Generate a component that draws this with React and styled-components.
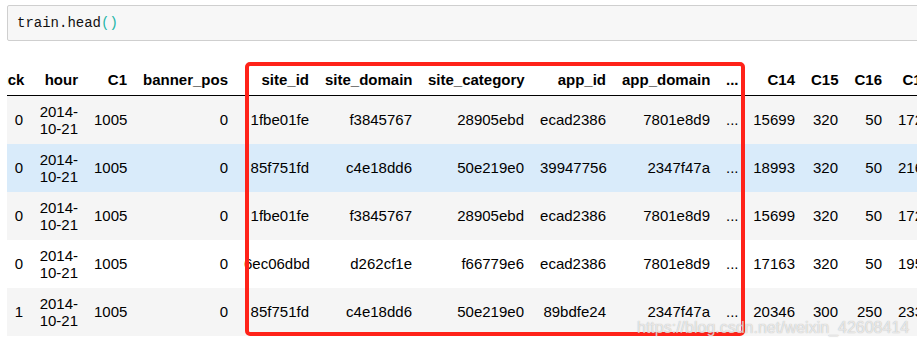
import React from 'react';
import styled, { createGlobalStyle } from 'styled-components';

const GlobalStyle = createGlobalStyle`
  html, body {
    margin: 0;
    padding: 0;
    background: #fff;
    overflow: hidden;
  }
`;

const Page = styled.div`
  position: relative;
  width: 917px;
  height: 347px;
  padding: 5px 0 0 7px;
  box-sizing: border-box;
  overflow: hidden;
`;

const CodeCell = styled.div`
  width: 940px;
  height: 36px;
  box-sizing: border-box;
  display: flex;
  align-items: center;
  padding-left: 9px;
  background: #f7f7f7;
  border: 1px solid #cfcfcf;
  border-radius: 2px;
  font-family: "Liberation Mono", monospace;
  font-size: 14px;
  color: #111;
`;

const Paren = styled.span`
  color: #22b5a8;
`;

const TableWrap = styled.div`
  margin-top: 24px;
  width: 910px;
  overflow: hidden;
`;

const Table = styled.table`
  margin-left: -24px;
  border-collapse: collapse;
  table-layout: fixed;
  width: 955px;
  font-family: "Liberation Sans", Arial, sans-serif;
  font-size: 15px;
  line-height: 17px;
  color: #000;
`;

const HeadCell = styled.th`
  text-align: right;
  font-weight: bold;
  padding: 6px 8px 7px;
  white-space: nowrap;
  border-bottom: 1px solid #000;
`;

const Row = styled.tr`
  height: 48px;
  background: ${({ $tone }) =>
    $tone === 'hover' ? '#d9ebfa' : $tone === 'odd' ? '#f5f5f5' : '#fff'};
`;

const Cell = styled.td`
  text-align: right;
  vertical-align: middle;
  padding: 0 8px 0 ${({ $wrap }) => ($wrap ? '4px' : '8px')};
  white-space: ${({ $wrap }) => ($wrap ? 'normal' : 'nowrap')};
  overflow: hidden;
`;

const Highlight = styled.div`
  position: absolute;
  left: 245px;
  top: 62px;
  width: 500px;
  height: 274px;
  box-sizing: border-box;
  border: 4px solid #ff2219;
  border-radius: 5px;
  pointer-events: none;
`;

const Watermark = styled.div`
  position: absolute;
  left: 637px;
  top: 319px;
  font-family: "Liberation Sans", Arial, sans-serif;
  font-size: 16px;
  color: rgba(255, 255, 255, 0.7);
  text-shadow: 0 0 1px rgba(110, 110, 110, 0.6);
  white-space: nowrap;
  pointer-events: none;
`;

const columns = [
  { key: 'click', width: 48 },
  { key: 'hour', width: 55 },
  { key: 'C1', width: 49 },
  { key: 'banner_pos', width: 101 },
  { key: 'site_id', width: 81 },
  { key: 'site_domain', width: 103 },
  { key: 'site_category', width: 112 },
  { key: 'app_id', width: 82 },
  { key: 'app_domain', width: 104 },
  { key: '...', width: 27 },
  { key: 'C14', width: 58 },
  { key: 'C15', width: 43 },
  { key: 'C16', width: 44 },
  { key: 'C17', width: 48 },
];

const rows = [
  { tone: 'odd', cells: ['0', '2014-10-21', '1005', '0', '1fbe01fe', 'f3845767', '28905ebd', 'ecad2386', '7801e8d9', '...', '15699', '320', '50', '1722'] },
  { tone: 'hover', cells: ['0', '2014-10-21', '1005', '0', '85f751fd', 'c4e18dd6', '50e219e0', '39947756', '2347f47a', '...', '18993', '320', '50', '2161'] },
  { tone: 'odd', cells: ['0', '2014-10-21', '1005', '0', '1fbe01fe', 'f3845767', '28905ebd', 'ecad2386', '7801e8d9', '...', '15699', '320', '50', '1722'] },
  { tone: 'even', cells: ['0', '2014-10-21', '1005', '0', '6ec06dbd', 'd262cf1e', 'f66779e6', 'ecad2386', '7801e8d9', '...', '17163', '320', '50', '1953'] },
  { tone: 'odd', cells: ['1', '2014-10-21', '1005', '0', '85f751fd', 'c4e18dd6', '50e219e0', '89bdfe24', '2347f47a', '...', '20346', '300', '250', '2333'] },
];

const App = () => {
  return (
    <>
      <GlobalStyle />
      <Page>
        <CodeCell>
          train.head<Paren>()</Paren>
        </CodeCell>
        <TableWrap>
          <Table>
            <colgroup>
              {columns.map((col) => (
                <col key={col.key} style={{ width: col.width }} />
              ))}
            </colgroup>
            <thead>
              <tr>
                {columns.map((col) => (
                  <HeadCell key={col.key}>{col.key}</HeadCell>
                ))}
              </tr>
            </thead>
            <tbody>
              {rows.map((row, i) => (
                <Row key={i} $tone={row.tone}>
                  {row.cells.map((value, j) => (
                    <Cell key={j} $wrap={j === 1}>
                      {value}
                    </Cell>
                  ))}
                </Row>
              ))}
            </tbody>
          </Table>
        </TableWrap>
        <Highlight />
        <Watermark>https://blog.csdn.net/weixin_42608414</Watermark>
      </Page>
    </>
  );
};

export default App;
